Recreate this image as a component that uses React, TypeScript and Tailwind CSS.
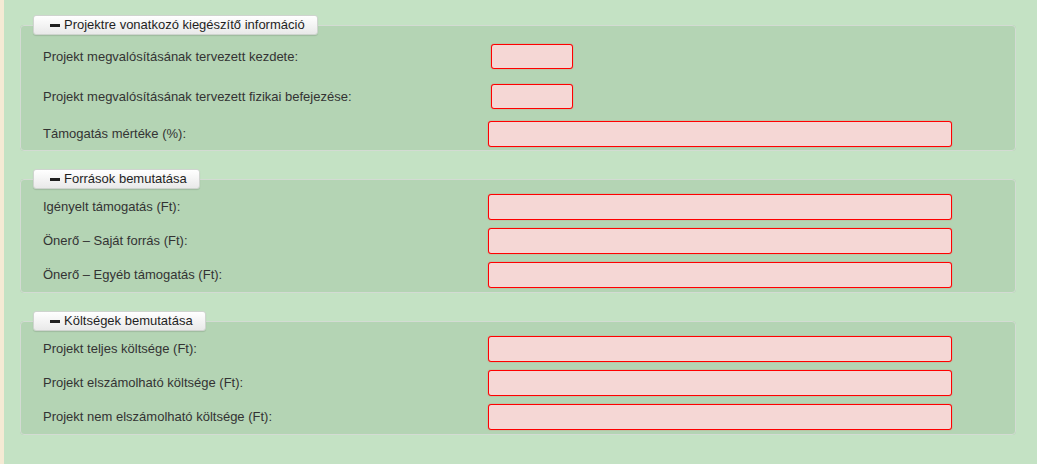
const font = { fontFamily: '"Liberation Sans", Arial, sans-serif' };

type Row = { label: string; small?: boolean; gap?: number };

const Field = ({ small }: { small?: boolean }) =>
  small ? (
    <div className="ml-[3px] h-[25px] w-[82px] rounded-[3px] border border-[#ff0000] bg-[#f5d7d5] shadow-[0_0_1px_rgba(255,0,0,0.7)]" />
  ) : (
    <div className="h-[26px] w-[464px] rounded-[3px] border border-[#ff0000] bg-[#f5d7d5] shadow-[0_0_1px_rgba(255,0,0,0.7)]" />
  );

const Section = ({
  title,
  rows,
  pt,
  pb,
}: {
  title: string;
  rows: Row[];
  pt: string;
  pb: string;
}) => (
  <fieldset className="rounded-[4px] border border-[#d3dbd3] bg-[#b4d4b4]">
    <legend className="ml-[12px] flex h-[20px] w-auto items-center rounded-[3px] border border-[#cfd4cf] bg-gradient-to-b from-white to-[#e9e9e9] pl-[16px] pr-[12px] text-[13px] text-[#1f1f1f] shadow-[0_1px_1px_rgba(0,0,0,0.12)]">
      <span className="mr-[4px] inline-block h-[3px] w-[10px] bg-[#1f1f1f]" />
      {title}
    </legend>
    <div className={'flex flex-col pl-[22px] ' + pt + ' ' + pb}>
      {rows.map((r, i) => (
        <div
          key={r.label}
          className="flex items-center"
          style={i > 0 ? { marginTop: r.gap ?? 8 } : undefined}
        >
          <div className="w-[445px] text-[13px] text-[#333]">{r.label}</div>
          <Field small={r.small} />
        </div>
      ))}
    </div>
  </fieldset>
);

export default function App() {
  return (
    <div className="flex min-h-[464px] w-full" style={font}>
      <div className="w-[4px] shrink-0 bg-[#f5ead4]" />
      <div className="flex flex-1 flex-col gap-[18px] bg-[#c4e2c4] pb-[27px] pl-[16px] pr-[21px] pt-[15px]">
        <Section
          title="Projektre vonatkozó kiegészítő információ"
          pt="pt-[9px]"
          pb="pb-[3px]"
          rows={[
            { label: 'Projekt megvalósításának tervezett kezdete:', small: true },
            { label: 'Projekt megvalósításának tervezett fizikai befejezése:', small: true, gap: 15 },
            { label: 'Támogatás mértéke (%):', gap: 12 },
          ]}
        />
        <Section
          title="Források bemutatása"
          pt="pt-[5px]"
          pb="pb-[4px]"
          rows={[
            { label: 'Igényelt támogatás (Ft):' },
            { label: 'Önerő – Saját forrás (Ft):' },
            { label: 'Önerő – Egyéb támogatás (Ft):' },
          ]}
        />
        <Section
          title="Költségek bemutatása"
          pt="pt-[5px]"
          pb="pb-[4px]"
          rows={[
            { label: 'Projekt teljes költsége (Ft):' },
            { label: 'Projekt elszámolható költsége (Ft):' },
            { label: 'Projekt nem elszámolható költsége (Ft):' },
          ]}
        />
      </div>
    </div>
  );
}
